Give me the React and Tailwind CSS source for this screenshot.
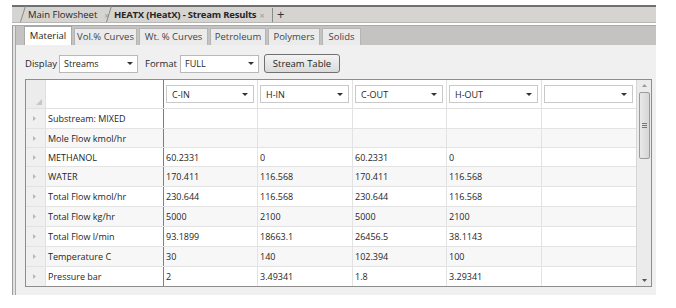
const rows = [
  { h: "h-[20px]", name: "Substream: MIXED", v: ["", "", "", "", ""] },
  { h: "h-[19px]", name: "Mole Flow kmol/hr", v: ["", "", "", "", ""] },
  { h: "h-[19px]", name: "METHANOL", v: ["60.2331", "0", "60.2331", "0", ""] },
  { h: "h-[20px]", name: "WATER", v: ["170.411", "116.568", "170.411", "116.568", ""] },
  { h: "h-[20px]", name: "Total Flow kmol/hr", v: ["230.644", "116.568", "230.644", "116.568", ""] },
  { h: "h-[20px]", name: "Total Flow kg/hr", v: ["5000", "2100", "5000", "2100", ""] },
  { h: "h-[20px]", name: "Total Flow l/min", v: ["93.1899", "18663.1", "26456.5", "38.1143", ""] },
  { h: "h-[20px]", name: "Temperature C", v: ["30", "140", "102.394", "100", ""] },
  { h: "h-[19px]", name: "Pressure bar", v: ["2", "3.49341", "1.8", "3.29341", ""] },
];

const cols = [
  { w: "w-[94px] border-r", label: "C-IN" },
  { w: "w-[95px] border-r", label: "H-IN" },
  { w: "w-[94px] border-r", label: "C-OUT" },
  { w: "w-[95px] border-r", label: "H-OUT" },
  { w: "w-[94px]", label: "" },
];

const innerTabs = [
  { w: "w-[63px]", t: "Vol.% Curves" },
  { w: "w-[69px]", t: "Wt. % Curves" },
  { w: "w-[56px]", t: "Petroleum" },
  { w: "w-[52px]", t: "Polymers" },
  { w: "w-[39px]", t: "Solids" },
];

function Caret({ className = "" }) {
  return (
    <svg width="6" height="3" viewBox="0 0 6 3" className={className}>
      <polygon points="0,0 6,0 3,3" fill="#333" />
    </svg>
  );
}

function Slant() {
  return (
    <svg width="6" height="16" viewBox="0 0 6 16" className="shrink-0">
      <line x1="0.5" y1="16" x2="5.5" y2="0" stroke="#8a8a8a" strokeWidth="1" />
    </svg>
  );
}

function Combo({ value, w }) {
  return (
    <div className={`${w} h-[18px] bg-white border border-[#b9b9b9] flex items-center justify-between pl-[4px] pr-[4px]`}>
      <span>{value}</span>
      <Caret />
    </div>
  );
}

export default function App() {
  return (
    <div className="w-[676px] h-[308px] bg-white text-[#262626] text-[9px] font-['Open_Sans',sans-serif] leading-none whitespace-nowrap pt-[5px] pl-[12px]">
      <div className="w-[644px] h-[290px] flex flex-col border-t-2 border-[#707070]">
        {/* document tabs */}
        <div className="h-[15px] bg-[#d6d4d1] flex items-end pl-[8px]">
          <Slant />
          <div className="w-[80px] shrink-0 flex items-center gap-[7px] pl-[2px] h-[14px]">
            <span className="text-[9.5px]">Main Flowsheet</span>
            <span className="text-[#9a9a9a]">×</span>
          </div>
          <Slant />
          <div className="w-[160px] shrink-0 flex items-center gap-[3px] pl-[2px] h-[14px]">
            <span className="font-bold text-[9.5px] tracking-[-0.2px]">HEATX (HeatX) - Stream Results</span>
            <span className="text-[#9a9a9a]">×</span>
          </div>
          <div className="w-px h-[14px] bg-[#8a8a8a]" />
          <span className="px-[4px] text-[13px] h-[14px] leading-[13px] text-[#333]">+</span>
        </div>
        <div className="h-px bg-[#b9b7b4]" />
        <div className="h-[2px] bg-white" />
        <div className="h-px bg-[#a9a9a9]" />

        {/* inner panel */}
        <div className="flex-1 flex border-l border-[#9c9c9c]">
          <div className="w-[2px] bg-[#e2e2e2]" />
          <div className="flex-1 flex flex-col border-l border-[#a8a8a8]">
            <div className="h-[19px] bg-[#c4c3c2] flex items-end pl-[8px] gap-[2px]">
              <div className="w-[48px] h-[19px] bg-white flex items-center justify-center border-t border-x border-[#a9a9a9] text-[9.5px]">Material</div>
              {innerTabs.map((t) => (
                <div key={t.t} className={`${t.w} h-[17px] bg-[#ebebeb] flex items-center justify-center border-t border-x border-[#b5b5b5] text-[#444] text-[9.5px]`}>
                  {t.t}
                </div>
              ))}
            </div>

            <div className="flex-1 bg-[#f0f0f0] pl-[9px] pt-[9px]">
              {/* display row */}
              <div className="flex items-center h-[19px]">
                <span className="w-[34px] text-[9.5px]">Display</span>
                <Combo value="Streams" w="w-[79px]" />
                <span className="ml-[7px] w-[35px] text-[9.5px]">Format</span>
                <Combo value="FULL" w="w-[79px]" />
                <button className="ml-[5px] w-[76px] h-[19px] rounded-[3px] border border-[#707070] bg-gradient-to-b from-[#f4f4f4] to-[#dadada] text-[#1e1e1e] text-[9.5px]">
                  Stream Table
                </button>
              </div>

              {/* grid */}
              <div className="mt-[6px] w-[627px] flex border border-[#8d8d8d] bg-white">
                <div className="flex flex-col">
                  <div className="flex h-[29px] border-b border-[#e0e0e0]">
                    <div className="w-[20px] bg-[#ececec] border-r border-[#e0e0e0] flex items-end justify-end pr-[3px] pb-[3px]">
                      <svg width="6" height="6" viewBox="0 0 6 6">
                        <polygon points="6,0 6,6 0,6" fill="#c6c6c6" />
                      </svg>
                    </div>
                    <div className="w-[118px] border-r border-[#7e7e7e]" />
                    {cols.map((c, i) => (
                      <div key={i} className={`${c.w} border-[#e0e0e0] flex items-center pl-[2px] pr-[3px]`}>
                        <div className="w-full h-[18px] border border-[#c9c9c9] bg-white flex items-center justify-between pl-[5px] pr-[5px]">
                          <span>{c.label}</span>
                          <Caret />
                        </div>
                      </div>
                    ))}
                  </div>
                  {rows.map((r, ri) => (
                    <div key={ri} className={`${r.h} flex border-b border-[#e3e3e3] last:border-b-0 ${ri % 2 ? "bg-[#f7f7f7]" : "bg-white"}`}>
                      <div className="w-[20px] bg-[#f0f0f0] border-r border-[#e0e0e0] flex items-center pl-[7px]">
                        <svg width="3" height="5" viewBox="0 0 3 5">
                          <polygon points="0,0 3,2.5 0,5" fill="#b8b8b8" />
                        </svg>
                      </div>
                      <div className="w-[118px] border-r border-[#7e7e7e] flex items-center pl-[2px]">{r.name}</div>
                      {cols.map((c, i) => (
                        <div key={i} className={`${c.w} border-[#e3e3e3] flex items-center pl-[2px]`}>
                          {r.v[i]}
                        </div>
                      ))}
                    </div>
                  ))}
                </div>

                {/* scrollbar */}
                <div className="w-[15px] border-l border-[#d6d6d6] bg-[#ebebeb] flex flex-col items-center pt-[4px] pb-[4px]">
                  <svg width="5" height="3" viewBox="0 0 5 3">
                    <polygon points="0,3 5,3 2.5,0" fill="#9a9a9a" />
                  </svg>
                  <div className="mt-[5px] w-[11px] h-[67px] rounded-[2px] border border-[#9b9b9b] bg-gradient-to-r from-[#e9e9e9] to-[#d6d6d6] flex flex-col items-center justify-center gap-[1px]">
                    <div className="w-[5px] h-px bg-[#777]" />
                    <div className="w-[5px] h-px bg-[#777]" />
                    <div className="w-[5px] h-px bg-[#777]" />
                  </div>
                  <div className="flex-1" />
                  <svg width="5" height="3" viewBox="0 0 5 3">
                    <polygon points="0,0 5,0 2.5,3" fill="#555" />
                  </svg>
                </div>
              </div>
            </div>
          </div>
        </div>
      </div>
    </div>
  );
}
